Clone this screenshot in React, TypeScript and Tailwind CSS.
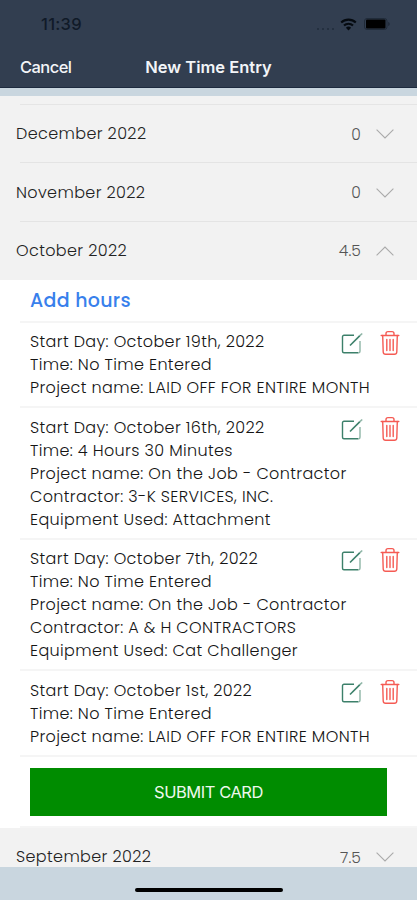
import { useState } from "react";

interface Entry {
  id: number;
  lines: string[];
}

interface MonthRowProps {
  name: string;
  hours: string;
  open?: boolean;
  onClick?: () => void;
}

const entries: Entry[] = [
  {
    id: 1,
    lines: [
      "Start Day: October 19th, 2022",
      "Time: No Time Entered",
      "Project name: LAID OFF FOR ENTIRE MONTH",
    ],
  },
  {
    id: 2,
    lines: [
      "Start Day: October 16th, 2022",
      "Time: 4 Hours 30 Minutes",
      "Project name: On the Job - Contractor",
      "Contractor: 3-K SERVICES, INC.",
      "Equipment Used: Attachment",
    ],
  },
  {
    id: 3,
    lines: [
      "Start Day: October 7th, 2022",
      "Time: No Time Entered",
      "Project name: On the Job - Contractor",
      "Contractor: A & H CONTRACTORS",
      "Equipment Used: Cat Challenger",
    ],
  },
  {
    id: 4,
    lines: [
      "Start Day: October 1st, 2022",
      "Time: No Time Entered",
      "Project name: LAID OFF FOR ENTIRE MONTH",
    ],
  },
];

function EditIcon() {
  return (
    <svg width="22" height="22" viewBox="0 0 22 22" fill="none">
      <path
        d="M13 3.2H3a1.5 1.5 0 0 0-1.5 1.5v14.5a1.5 1.5 0 0 0 1.5 1.5h14.5"
        stroke="#3c806a"
        strokeWidth="1.4"
      />
      <path
        d="M17.5 20.7a1.5 1.5 0 0 0 1.5-1.5V9"
        stroke="#8eb5a6"
        strokeWidth="1.4"
      />
      <path d="M9 13.5 18.9 3.6" stroke="#3c806a" strokeWidth="1.6" />
      <path d="m18.9 3.6 2.3-2.1" stroke="#8eb5a6" strokeWidth="1.6" />
    </svg>
  );
}

function TrashIcon() {
  return (
    <svg
      width="20"
      height="26"
      viewBox="0 0 20 26"
      fill="none"
      stroke="#f55b54"
      strokeWidth="1.4"
      strokeLinecap="round"
      strokeLinejoin="round"
    >
      <path d="M1.2 5.5h17.6M6 5.5V3.6C6 2.3 6.8 1.6 8 1.6h4c1.2 0 2 .7 2 2v1.9" />
      <path d="m2.7 5.5.5 16.5c.1 1.6.8 2.3 2.4 2.3h8.8c1.6 0 2.3-.7 2.4-2.3l.5-16.5" />
      <path d="M6.8 9.5v11M10 9.5v11M13.2 9.5v11" />
    </svg>
  );
}

function StatusBar() {
  return (
    <div className="flex h-12 items-center justify-between pl-[41px] pr-[26px]">
      <span className="text-[16.5px] font-medium tracking-[0.3px] text-[#101a28]">
        11:39
      </span>
      <div className="flex items-center">
        <div className="mr-[6px] mt-[9px] flex gap-[3px]">
          <i className="size-[2px] rounded-full bg-[#202c3b]" />
          <i className="size-[2px] rounded-full bg-[#202c3b]" />
          <i className="size-[2px] rounded-full bg-[#202c3b]" />
          <i className="size-[2px] rounded-full bg-[#202c3b]" />
        </div>
        <svg width="17" height="13" viewBox="0 0 17 13" fill="none">
          <path
            d="M1.2 4.6a10.5 10.5 0 0 1 14.6 0M4 7.6a6.4 6.4 0 0 1 9 0"
            stroke="#050a10"
            strokeWidth="2.1"
          />
          <path d="M8.5 12.5 5.9 9.8a3.8 3.8 0 0 1 5.2 0z" fill="#050a10" />
        </svg>
        <svg className="ml-[7px]" width="27" height="12" viewBox="0 0 27 12">
          <rect
            x=".5"
            y=".5"
            width="22.5"
            height="11"
            rx="2.5"
            fill="none"
            stroke="#202b39"
          />
          <rect x="2" y="1.5" width="19.5" height="9" rx="1" fill="#000" />
          <path d="M24.2 4v4c1-.3 1.5-1 1.5-2s-.5-1.7-1.5-2" fill="#202b39" />
        </svg>
      </div>
    </div>
  );
}

function MonthRow({ name, hours, open, onClick }: MonthRowProps) {
  return (
    <button
      onClick={onClick}
      className="flex h-[58.4px] w-full shrink-0 items-center bg-[#f2f2f2] pl-4 pr-[23px]"
    >
      <span className="text-[16px] font-light tracking-[0.37px] text-[#222]">
        {name}
      </span>
      <span className="ml-auto mr-[15px] text-[15.5px] font-light tracking-[0.1px] text-[#555]">
        {hours}
      </span>
      <svg
        className={open ? "rotate-180" : ""}
        width="18"
        height="10"
        viewBox="0 0 18 10"
        fill="none"
      >
        <path d="m.6.7 8.4 8.2L17.4.7" stroke="#aaa" strokeWidth="1.1" />
      </svg>
    </button>
  );
}

function EntryRow({ entry }: { entry: Entry }) {
  return (
    <div className="ml-5 flex justify-between border-t-2 border-[#f5f5f5] pb-[7.2px] pl-[10px] pr-[17px] pt-[7.4px]">
      <div className="w-0 whitespace-nowrap text-[16px] font-light leading-[23px] tracking-[0.36px] text-[#151515]">
        {entry.lines.map((line) => (
          <p key={line}>{line}</p>
        ))}
      </div>
      <div className="flex h-[26px] items-center gap-[17px]">
        <button aria-label="Edit entry">
          <EditIcon />
        </button>
        <button aria-label="Delete entry">
          <TrashIcon />
        </button>
      </div>
    </div>
  );
}

export default function App() {
  const [open, setOpen] = useState(true);

  return (
    <div className="flex h-[900px] w-[417px] flex-col overflow-hidden bg-[#c9d6df] font-[Poppins,Inter,sans-serif]">
      <header className="h-[88px] shrink-0 border-b border-[#1d2a3e] bg-[#323e50] font-[Inter,sans-serif]">
        <StatusBar />
        <div className="grid h-[39px] grid-cols-[1fr_auto_1fr] items-center px-5 text-[16.5px] text-[#f3f5f8]">
          <button className="justify-self-start font-medium tracking-[-0.55px]">
            Cancel
          </button>
          <h1 className="font-semibold">New Time Entry</h1>
        </div>
      </header>

      <main className="mt-2 flex flex-1 flex-col overflow-hidden bg-[#f2f2f2]">
        <div className="ml-5 mt-2 h-px shrink-0 bg-[#e5e5e5]" />
        <MonthRow name="December 2022" hours="0" />
        <div className="-mt-px ml-5 h-px shrink-0 bg-[#e4e4e4]" />
        <MonthRow name="November 2022" hours="0" />
        <div className="-mt-px ml-5 h-px shrink-0 bg-[#e4e4e4]" />
        <MonthRow
          name="October 2022"
          hours="4.5"
          open={open}
          onClick={() => setOpen(!open)}
        />
        {open && (
          <section className="h-[548px] shrink-0 bg-white">
            <button className="ml-[30px] flex h-[40.5px] items-center pt-[2px] text-[19px] font-medium tracking-[0.3px] text-[#3880ec]">
              Add hours
            </button>
            {entries.map((entry) => (
              <EntryRow key={entry.id} entry={entry} />
            ))}
            <div className="ml-5 border-y-2 border-[#f5f5f5] pb-[10px] pl-[10px] pr-[30px] pt-[11px]">
              <button className="h-12 w-full bg-[#008c00] pt-px font-[Inter,sans-serif] text-[16.5px] tracking-[-0.45px] text-[#eef8ee]">
                SUBMIT CARD
              </button>
            </div>
          </section>
        )}
        <MonthRow name="September 2022" hours="7.5" />
      </main>

      <footer className="flex h-[33px] shrink-0 justify-center pt-[21px]">
        <div className="h-1 w-[148px] rounded-full bg-black" />
      </footer>
    </div>
  );
}
